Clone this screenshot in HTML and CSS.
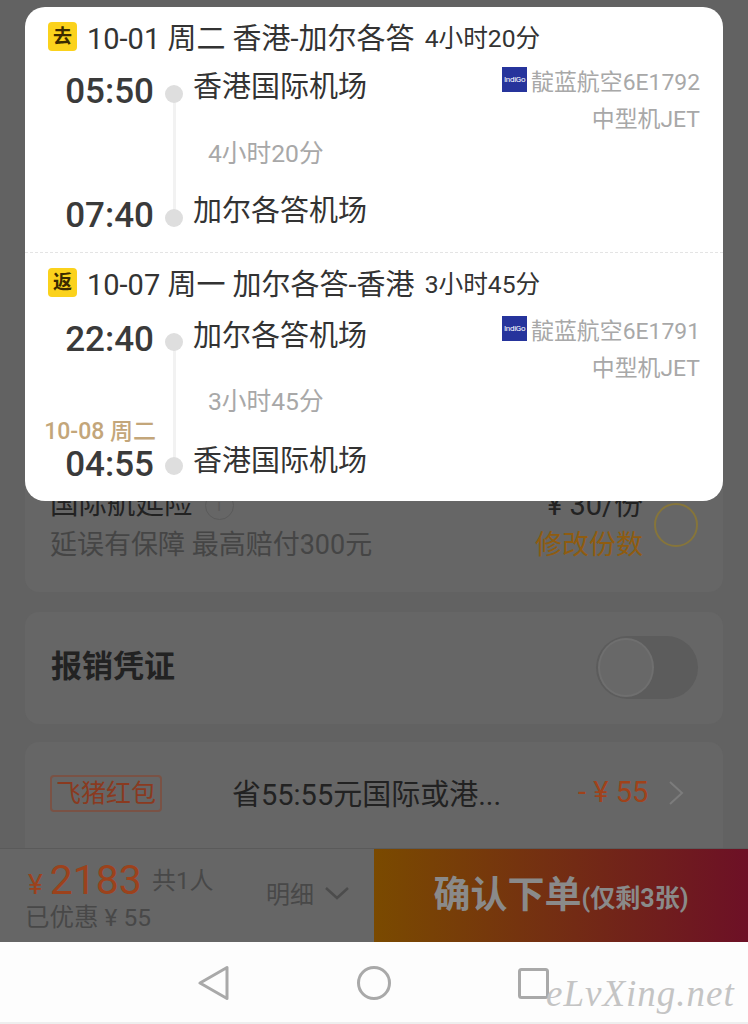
FILE: index.html
```html
<!DOCTYPE html>
<html lang="zh-CN">
<head>
  <meta charset="UTF-8" />
  <meta name="viewport" content="width=device-width, initial-scale=1" />
  <title>确认订单</title>
  <link rel="stylesheet" href="styles.css">
</head>
<body>

<div class="page">
  <main class="content">
    <section class="card insurance">
      <div class="ins-left">
        <div class="ins-title">国际航延险 <span class="info-icon">i</span></div>
        <div class="ins-desc">延误有保障 最高赔付300元</div>
      </div>
      <div class="ins-right">
        <div class="ins-price">¥ 30/份</div>
        <div class="ins-edit">修改份数</div>
      </div>
      <span class="radio"></span>
    </section>

    <section class="card receipt">
      <span class="receipt-title">报销凭证</span>
      <span class="toggle"><span class="knob"></span></span>
    </section>

    <section class="card coupon">
      <span class="coupon-tag">飞猪红包</span>
      <span class="coupon-text">省55:55元国际或港...</span>
      <span class="coupon-amount">- ¥ 55</span>
      <svg class="coupon-arrow" width="16" height="26" viewBox="0 0 16 26"><path d="M2 2l12 11L2 24" fill="none" stroke="#7c7c7c" stroke-width="2"/></svg>
    </section>
  </main>

  <footer class="bar">
    <div class="bar-price">
      <div class="price-line"><span class="yen">¥</span><span class="price">2183</span><span class="people">共1人</span></div>
      <div class="saved">已优惠 ¥ 55</div>
    </div>
    <div class="detail">明细
      <svg width="24" height="14" viewBox="0 0 24 14"><path d="M1 2l11 10L23 2" fill="none" stroke="#4c4c4c" stroke-width="2.5"/></svg>
    </div>
    <div class="submit">确认下单<small>(仅剩3张)</small></div>
  </footer>

  <nav class="sysnav">
    <svg width="32" height="36" viewBox="0 0 32 36"><path d="M29 2.5V33.5L2 18Z" fill="none" stroke="#a9a9a9" stroke-width="3" stroke-linejoin="round"/></svg>
    <svg width="36" height="36" viewBox="0 0 36 36"><circle cx="18" cy="18" r="15.5" fill="none" stroke="#a9a9a9" stroke-width="3"/></svg>
    <svg width="31" height="31" viewBox="0 0 31 31"><rect x="1.5" y="1.5" width="28" height="28" rx="2" fill="none" stroke="#a9a9a9" stroke-width="3"/></svg>
  </nav>
</div>

<div class="flight-pop">
  <div class="seg seg-go">
    <div class="seg-head">
      <span class="badge">去</span>
      <span class="seg-date">10-01 周二 香港-加尔各答</span>
      <span class="seg-total">4小时20分</span>
    </div>
    <div class="route">
      <div class="time from">05:50</div>
      <span class="dot from"></span>
      <div class="airport from">香港国际机场</div>
      <div class="airline">
        <div><span class="logo">IndiGo</span>靛蓝航空6E1792</div>
        <div>中型机JET</div>
      </div>
      <div class="duration">4小时20分</div>
      <div class="time to">07:40</div>
      <span class="dot to"></span>
      <div class="airport to">加尔各答机场</div>
    </div>
  </div>

  <div class="seg seg-back">
    <div class="seg-head">
      <span class="badge">返</span>
      <span class="seg-date">10-07 周一 加尔各答-香港</span>
      <span class="seg-total">3小时45分</span>
    </div>
    <div class="route">
      <div class="time from">22:40</div>
      <span class="dot from"></span>
      <div class="airport from">加尔各答机场</div>
      <div class="airline">
        <div><span class="logo">IndiGo</span>靛蓝航空6E1791</div>
        <div>中型机JET</div>
      </div>
      <div class="duration">3小时45分</div>
      <div class="next-day">10-08 周二</div>
      <div class="time to">04:55</div>
      <span class="dot to"></span>
      <div class="airport to">香港国际机场</div>
    </div>
  </div>
</div>

<div class="watermark">eLvXing.net</div>

</body>
</html>
```

FILE: styles.css
```css
* { box-sizing: border-box; }
html, body { margin: 0; height: 1024px; overflow: hidden; }
body { position: relative; font-family: Roboto, "Noto Sans CJK SC", sans-serif; background: #626262; color: #222; }

.page { height: 1024px; display: flex; flex-direction: column; }
.content { flex: 1; min-height: 0; overflow: hidden; padding: 470px 25px 0; display: flex; flex-direction: column; }
.card { background: #666; border-radius: 14px; display: flex; align-items: center; flex-shrink: 0; }

.insurance { height: 122px; padding: 17px 25px 0 26px; align-items: flex-start; margin-bottom: 20px; }
.ins-left { flex: 1; margin-left: -1px; }
.ins-title { font-size: 28.5px; line-height: 36px; color: #222; display: flex; align-items: center; gap: 12px; }
.info-icon { width: 29px; height: 29px; border: 1.5px solid #5a5a5a; border-radius: 50%; color: #5a5a5a; font-size: 17px; line-height: 26px; text-align: center; }
.ins-desc { font-size: 27px; line-height: 40px; margin-top: 2px; color: #454545; white-space: nowrap; }
.ins-right { text-align: right; margin-right: 11px; }
.ins-price { font-size: 29px; line-height: 36px; color: #222; }
.ins-edit { font-size: 27px; line-height: 40px; margin-top: 2px; color: #8f5c10; }
.radio { width: 44px; height: 44px; margin-top: 16px; border: 2.5px solid #86753a; border-radius: 50%; }

.receipt { height: 112px; padding: 0 25px 0 26px; justify-content: space-between; margin-bottom: 18px; }
.receipt-title { font-size: 31px; font-weight: 700; color: #222; margin-bottom: 10px; }
.toggle { width: 102px; height: 63px; padding: 2px; border-radius: 32px; background: #5c5c5c; margin-bottom: 2px; }
.knob { display: block; width: 56px; height: 59px; border-radius: 50%; background: #686868; border: 2px solid #6f6f6f; }

.coupon { height: 120px; padding: 0 40px 18px 25px; }
.coupon-tag { flex-shrink: 0; width: 112px; height: 37px; border: 2px solid #7a5245; border-radius: 4px; color: #8a3a20; font-size: 25px; line-height: 33px; text-align: center; }
.coupon-text { flex-shrink: 0; margin-left: 70px; width: 346px; font-size: 29px; color: #222; white-space: nowrap; margin-bottom: 2px; }
.coupon-amount { flex-shrink: 0; font-size: 29px; color: #a0421a; white-space: nowrap; width: 90px; margin-bottom: 2px; }
.coupon-arrow { flex-shrink: 0; }

.bar { height: 94px; flex-shrink: 0; display: flex; background: #666; border-top: 1px solid #5a5a5a; }
.bar-price { width: 242px; padding: 8px 0 0 28px; }
.price-line { display: flex; align-items: baseline; height: 46px; }
.yen { font-size: 28px; color: #9c421c; margin-right: 7px; }
.price { font-size: 41px; line-height: 46px; color: #9c421c; }
.people { font-size: 24px; color: #484848; margin-left: 10px; position: relative; top: -5px; }
.saved { font-size: 24.5px; line-height: 28px; margin: 1px 0 0 -3px; color: #484848; white-space: nowrap; }
.detail { width: 132px; padding: 0 0 6px 24px; display: flex; align-items: center; gap: 11px; font-size: 24px; color: #484848; }
.submit { flex: 1; display: flex; align-items: center; justify-content: center; padding: 0 0 8px 0; background: linear-gradient(90deg, #7a4a00, #6d1026); color: #8a8a8a; font-size: 37px; font-weight: 700; }
.submit small { font-size: 25px; font-weight: 700; margin-top: 8px; }

.sysnav { height: 82px; flex-shrink: 0; padding: 2px 199px 0 198px; display: flex; align-items: center; justify-content: space-between; background: #fdfdfd; border-bottom: 2px solid #eee; }

/* popup over the dimmed page */
.flight-pop { position: absolute; left: 25px; top: 7px; width: 698px; background: #fff; border-radius: 20px; }
.seg { padding: 11px 23px 0 0; }
.seg-go { height: 246px; border-bottom: 1px dashed #e4e4e4; }
.seg-back { height: 248px; }
.seg-head { display: flex; align-items: center; height: 36px; padding-left: 23px; color: #333; white-space: nowrap; }
.badge { width: 29px; height: 29px; margin-right: 10px; border-radius: 4px; background: #fbd21c; color: #3a2a00; font-size: 19px; font-weight: 700; line-height: 29px; text-align: center; }
.seg-date { font-size: 29px; margin-right: 10px; }
.seg-total { font-size: 24.7px; }

.route { display: grid; grid-template-columns: 129px 18px 1fr auto; grid-template-rows: 62px 62px 62px; column-gap: 11px; margin-top: 7px; background: linear-gradient(#f2f2f2, #f2f2f2) no-repeat 148px 34px / 3px 124px; }
.seg-back .route { margin-top: 9px; background-position: 148px 30px; }
.from { grid-row: 1; }
.to { grid-row: 3; }
.time { grid-column: 1; font-size: 35px; font-weight: 500; line-height: 40px; text-align: right; color: #3a3a3a; align-self: center; }
.dot { grid-column: 2; width: 18px; height: 18px; border-radius: 50%; background: #dedede; align-self: center; margin-top: 4px; }
.airport { grid-column: 3; font-size: 29px; line-height: 40px; color: #333; align-self: center; margin-top: -10px; margin-left: -1px; }
.seg-back .airport { margin-top: -8px; }
.seg-back .time.to { margin-top: 2px; }
.seg-back .airport.to { margin-top: -6px; }
.airline { grid-row: 1 / span 2; grid-column: 4; font-size: 22.9px; line-height: 37px; color: #a8a8a8; text-align: right; padding-top: 3px; white-space: nowrap; }
.seg-back .airline { padding-top: 4px; }
.logo { display: inline-block; width: 25px; height: 25px; margin-right: 4px; background: #26349c; color: #fff; font-size: 8px; letter-spacing: -0.3px; line-height: 25px; text-align: center; vertical-align: -2px; overflow: hidden; }
.duration { grid-row: 2; grid-column: 3; padding-left: 14px; font-size: 24.7px; line-height: 40px; color: #a8a8a8; align-self: center; }
.next-day { grid-row: 2 / span 2; grid-column: 1; align-self: start; justify-self: end; margin: 47px -2px 0 -30px; font-size: 23px; font-weight: 500; line-height: 28px; color: #c3a67a; white-space: nowrap; }

.watermark { position: absolute; left: 546px; top: 972px; font-family: "Liberation Serif", serif; font-style: italic; font-size: 37px; letter-spacing: 1px; color: #c4c4c4; }
```
